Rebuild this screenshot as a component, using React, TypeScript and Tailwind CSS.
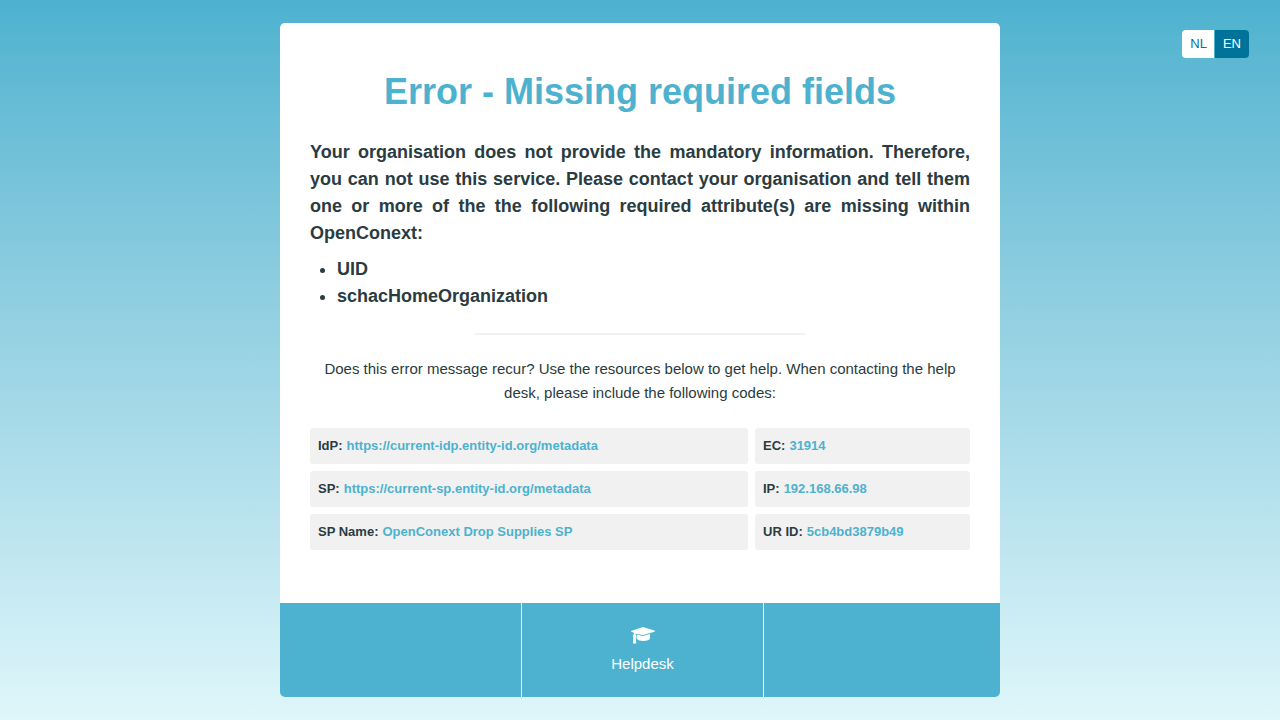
const missingAttributes = ["UID", "schacHomeOrganization"];

const codes = [
  { label: "IdP", value: "https://current-idp.entity-id.org/metadata" },
  { label: "EC", value: "31914" },
  { label: "SP", value: "https://current-sp.entity-id.org/metadata" },
  { label: "IP", value: "192.168.66.98" },
  { label: "SP Name", value: "OpenConext Drop Supplies SP" },
  { label: "UR ID", value: "5cb4bd3879b49" },
];

function GraduationCapIcon() {
  return (
    <svg viewBox="0 0 24 17" className="h-[17px] w-6" fill="currentColor" aria-hidden="true">
      <path d="M12 0 24 3.700v.7L12.600 7.900c-.4.100-.8.100-1.200 0L6.500 6.900c-1.100-.2-1.900.1-2.300.700.8.400 1.100.9 1 1.500-.1.500-.3.700-.5.900L5.300 16.600H2L2.300 10c-.4-.3-.5-.6-.5-1 0-.5.2-.9.600-1.200.1-.800.4-1.400.9-1.900L0 4.500V3.900Z" />
      <path d="M5.600 7.600 11 8.800c.7.200 1.300.2 2 0L19 7v4.300c0 1.500-2.900 2.600-6.600 2.600-3 0-5.500-.7-6.600-2.200L5.400 10c.5-.7.6-1.500.2-2.400Z" />
    </svg>
  );
}

function LanguageSwitch() {
  return (
    <nav
      aria-label="Language"
      className="absolute top-[30px] right-[31px] flex overflow-hidden rounded text-[13px] leading-7"
    >
      <a href="#nl" className="border-r border-[#4db2cf] bg-white pr-[7px] pl-2 text-[#00739b]">
        NL
      </a>
      <a href="#en" aria-current="true" className="bg-[#00739b] px-2 text-white">
        EN
      </a>
    </nav>
  );
}

export default function App() {
  return (
    <div className="relative min-h-screen bg-linear-to-b from-[#4db2cf] to-[#dff6fa] px-4 py-[23px] font-['Liberation_Sans',Arial,sans-serif] text-[#2a3c41]">
      <LanguageSwitch />
      <main className="mx-auto max-w-[720px] overflow-hidden rounded-[5px] bg-white">
        <div className="px-[30px] pt-[42px] pb-[53px]">
          <h1 className="text-center text-4xl leading-[54px] font-bold text-[#4db2cf]">
            Error - Missing required fields
          </h1>
          <div className="mt-5 text-lg leading-[27px] font-bold">
            <p className="text-justify">
              Your organisation does not provide the mandatory information. Therefore, you can not use
              this service. Please contact your organisation and tell them one or more of the the
              following required attribute(s) are missing within OpenConext:
            </p>
            <ul className="mt-[9px] list-disc pl-[27px]">
              {missingAttributes.map((name) => (
                <li key={name}>{name}</li>
              ))}
            </ul>
          </div>
          <hr className="mx-auto mt-[23px] w-1/2 border-t-2 border-[#f1f1f1]" />
          <p className="mt-[22px] text-center text-[15px] leading-6">
            Does this error message recur? Use the resources below to get help. When contacting the
            help desk, please include the following codes:
          </p>
          <dl className="mt-[23px] grid grid-cols-[438fr_215fr] gap-[7px] text-[13px] font-bold">
            {codes.map(({ label, value }) => (
              <div key={label} className="flex h-9 items-center gap-1 rounded-[3px] bg-[#f1f1f1] px-2">
                <dt>{label}:</dt>
                <dd className="text-[#4db2cf]">{value}</dd>
              </div>
            ))}
          </dl>
        </div>
        <footer className="grid grid-cols-[242fr_242fr_236fr] bg-[#4db2cf] text-[15px] text-white">
          <div className="border-r border-white" />
          <a
            href="#helpdesk"
            className="flex flex-col items-center gap-2 border-r border-white pt-6 pb-[21px] leading-6"
          >
            <GraduationCapIcon />
            Helpdesk
          </a>
          <div />
        </footer>
      </main>
    </div>
  );
}
